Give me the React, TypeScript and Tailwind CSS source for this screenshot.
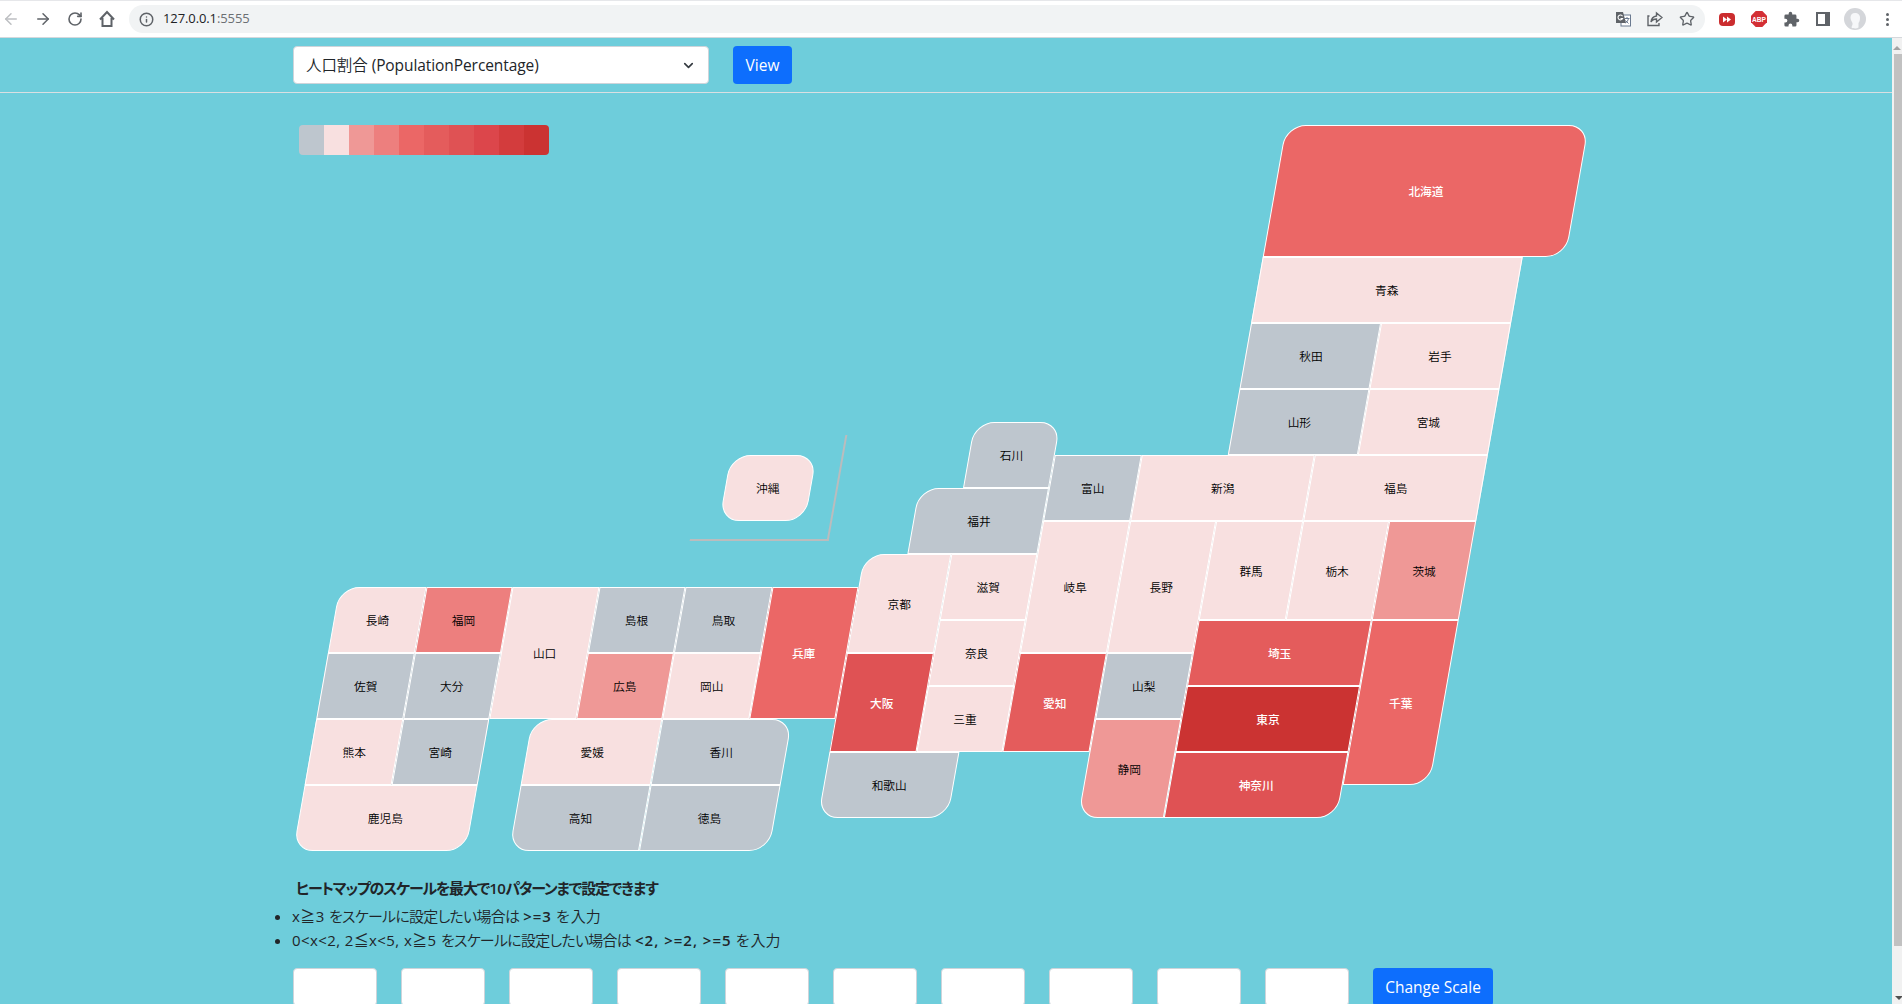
import React from "react";
import { ArrowLeft, ArrowRight, RotateCw, Info, Star, ChevronDown } from "lucide-react";

const FONT = "font-['Open_Sans','Noto_Sans_CJK_JP',sans-serif]";

const NONE = "bg-[#bec6ce] text-black font-[350]";
const L1 = "bg-[#f8e0e0] text-black font-[350]";
const L2 = "bg-[#ef9896] text-black font-[350]";
const L3 = "bg-[#ed7f7e] text-black font-[350]";
const L4 = "bg-[#eb6766] text-white font-medium";
const L5 = "bg-[#e45c5c] text-white font-medium";
const L6 = "bg-[#df5254] text-white font-medium";
const L9 = "bg-[#cb3332] text-white font-medium";

type Pref = [name: string, col: number, row: number, w: number, h: number, tone: string, round?: string];

const TL = "rounded-tl-[20px]";
const BR = "rounded-br-[20px]";
const BL = "rounded-bl-[20px]";

const PREFS: Pref[] = [
  ["北海道", 20, 0, 7, 4, L4, "rounded-tl-[20px] rounded-tr-[20px] rounded-br-[20px]"],
  ["青森", 20, 4, 6, 2, L1],
  ["秋田", 20, 6, 3, 2, NONE],
  ["岩手", 23, 6, 3, 2, L1],
  ["山形", 20, 8, 3, 2, NONE],
  ["宮城", 23, 8, 3, 2, L1],
  ["石川", 14, 9, 2, 2, NONE, "rounded-t-[20px]"],
  ["富山", 16, 10, 2, 2, NONE],
  ["新潟", 18, 10, 4, 2, L1],
  ["福島", 22, 10, 4, 2, L1],
  ["福井", 13, 11, 3, 2, NONE, TL],
  ["岐阜", 16, 12, 2, 4, L1],
  ["長野", 18, 12, 2, 4, L1],
  ["群馬", 20, 12, 2, 3, L1],
  ["栃木", 22, 12, 2, 3, L1],
  ["茨城", 24, 12, 2, 3, L2],
  ["京都", 12, 13, 2, 3, L1, TL],
  ["滋賀", 14, 13, 2, 2, L1],
  ["奈良", 14, 15, 2, 2, L1],
  ["埼玉", 20, 15, 4, 2, L5],
  ["千葉", 24, 15, 2, 5, L4, BR],
  ["大阪", 12, 16, 2, 3, L6],
  ["愛知", 16, 16, 2, 3, L5],
  ["山梨", 18, 16, 2, 2, NONE],
  ["三重", 14, 17, 2, 2, L1],
  ["東京", 20, 17, 4, 2, L9],
  ["静岡", 18, 18, 2, 3, L2, BL],
  ["神奈川", 20, 19, 4, 2, L6, BR],
  ["和歌山", 12, 19, 3, 2, NONE, "rounded-b-[20px]"],
  ["長崎", 0, 14, 2, 2, L1, TL],
  ["福岡", 2, 14, 2, 2, L3],
  ["山口", 4, 14, 2, 4, L1],
  ["島根", 6, 14, 2, 2, NONE],
  ["鳥取", 8, 14, 2, 2, NONE],
  ["兵庫", 10, 14, 2, 4, L4],
  ["佐賀", 0, 16, 2, 2, NONE],
  ["大分", 2, 16, 2, 2, NONE],
  ["広島", 6, 16, 2, 2, L2],
  ["岡山", 8, 16, 2, 2, L1],
  ["熊本", 0, 18, 2, 2, L1],
  ["宮崎", 2, 18, 2, 2, NONE],
  ["愛媛", 5, 18, 3, 2, L1, TL],
  ["香川", 8, 18, 3, 2, NONE, "rounded-tr-[20px]"],
  ["鹿児島", 0, 20, 4, 2, L1, "rounded-b-[20px]"],
  ["高知", 5, 20, 3, 2, NONE, BL],
  ["徳島", 8, 20, 3, 2, NONE, BR],
];

const SCALE = [
  "bg-[#bec6ce]",
  "bg-[#f8e0e0]",
  "bg-[#ef9896]",
  "bg-[#ed7f7e]",
  "bg-[#eb6766]",
  "bg-[#e45c5c]",
  "bg-[#df5254]",
  "bg-[#dc464b]",
  "bg-[#d33c3d]",
  "bg-[#cb3332]",
];

function Label({ children }: { children: React.ReactNode }) {
  return <span className="skew-x-[10deg] pt-[2px] text-[11.7px] leading-none">{children}</span>;
}

function Kana({ children }: { children: React.ReactNode }) {
  return <span className="font-[350] tracking-[-0.75px] [font-feature-settings:'palt']">{children}</span>;
}

function BrowserBar() {
  return (
    <div className="flex h-[38px] shrink-0 items-center border-b border-[#d5d8dc] border-t border-t-[#e6e7ea] bg-white text-[#5f6368]">
      <div className="flex w-[129px] shrink-0 items-center">
        <ArrowLeft size={18} className="ml-0.5 shrink-0 text-[#bdbfc2]" />
        <ArrowRight size={18} className="ml-3.5 shrink-0" />
        <RotateCw size={16} strokeWidth={2.4} className="ml-[15px] shrink-0" />
        <svg width="16" height="18" viewBox="0 0 16 18" className="ml-[16px] shrink-0" fill="none" stroke="currentColor" strokeWidth="2">
          <path d="M3.500 8v8h9V8M1 9.500 8 2l7 7.500" />
        </svg>
      </div>
      <div className="flex h-7 w-[1576px] shrink-0 items-center rounded-full bg-[#f1f3f4] pl-2.5">
        <Info size={15} strokeWidth={2.4} />
        <span className="ml-[9px] font-['Open_Sans',sans-serif] text-[13px] tracking-[-0.1px] text-[#202124]">
          127.0.0.1<span className="text-[#6b6f73]">:5555</span>
        </span>
        <div className="ml-auto flex items-center gap-4 pr-2.5">
          <svg width="16" height="16" viewBox="0 0 16 16">
            <rect x="6" y="4" width="9.5" height="11" fill="#fff" stroke="#6b7a90" />
            <path d="M1 1h7l3 11H1z" fill="#5f6368" />
            <path d="M7.500 5.200A2.400 2.400 0 1 0 7.600 7.500H5.500" fill="none" stroke="#fff" strokeWidth="1.1" />
            <path d="M9.500 7.500h5M12 6v1.500M13.500 7.500c-.5 2-1.500 3.500-3 4.500M10.500 9.500l3 3" fill="none" stroke="#6b7a90" />
          </svg>
          <svg width="16" height="16" viewBox="0 0 16 16" fill="none" stroke="currentColor" strokeWidth="1.4">
            <path d="M2.500 5H1v9.500h11V12M9.500 5V2l5.500 4.500-5.500 4.500V8C7 8 5 9 4 11c.3-3 2-5.500 5.500-6Z" />
          </svg>
          <Star size={16} />
        </div>
      </div>
      <div className="flex flex-1 items-center">
        <svg width="16" height="13" viewBox="0 0 16 13" className="ml-3.5">
          <rect width="16" height="13" rx="4" fill="#cb2d2f" />
          <path d="M4 3.500 8 6.500 4 9.500zM8 3.500l4 3-4 3z" fill="#fff" />
        </svg>
        <svg width="16" height="16" viewBox="0 0 16 16" className="ml-4">
          <path d="M4.700 0h6.600L16 4.700v6.600L11.300 16H4.700L0 11.300V4.700z" fill="#d32f35" />
          <text x="8" y="10.800" fontSize="7.500" fontWeight="700" textAnchor="middle" textLength="14" lengthAdjust="spacingAndGlyphs" fill="#fff" fontFamily="Liberation Sans">ABP</text>
        </svg>
        <svg width="17" height="17" viewBox="0 0 24 24" className="ml-4" fill="currentColor">
          <path d="M20.500 11H19V7a2 2 0 0 0-2-2h-4V3.500a2.500 2.500 0 0 0-5 0V5H4a2 2 0 0 0-2 2v3.800h1.500a2.700 2.700 0 0 1 0 5.400H2V20a2 2 0 0 0 2 2h3.800v-1.500a2.700 2.700 0 0 1 5.400 0V22H17a2 2 0 0 0 2-2v-4h1.500a2.500 2.500 0 0 0 0-5z" />
        </svg>
        <svg width="14" height="14" viewBox="0 0 14 14" className="ml-4">
          <path d="M1 1h12v12H1z" fill="#fff" stroke="#5f6368" strokeWidth="2" />
          <path d="M9 1h4v12H9z" fill="#5f6368" />
        </svg>
        <svg width="22" height="22" viewBox="0 0 22 22" className="ml-3.5">
          <circle cx="11" cy="11" r="11" fill="#d4d6da" />
          <path d="M11 5C8 5 6.500 7 6.500 9.500S8 14 8.500 15c.5 2-1 3-1 4.500 1.500 1 5 1.500 7 0V15c1-1 1.500-3 1.500-5.500S14 5 11 5z" fill="#f6f7f9" />
        </svg>
        <div className="ml-[20px] flex flex-col gap-[2px]">
          <i className="size-[3px] rounded-full bg-[#5f6368]" />
          <i className="size-[3px] rounded-full bg-[#5f6368]" />
          <i className="size-[3px] rounded-full bg-[#5f6368]" />
        </div>
      </div>
    </div>
  );
}

function MapGrid() {
  return (
    <div className="ml-[357px] grid w-[1168.5px] -skew-x-[10deg] grid-cols-[repeat(27,43.28px)] grid-rows-[repeat(22,33px)]">
      {PREFS.map(([name, col, row, w, h, tone, round]) => (
        <div
          key={name}
          className={`flex items-center justify-center border border-white ${tone} ${round ?? ""}`}
          style={{ gridColumn: `${col + 1} / span ${w}`, gridRow: `${row + 1} / span ${h}` }}
        >
          <Label>{name}</Label>
        </div>
      ))}
      <div className="col-[9/span_3] row-[10/span_4] -mr-[5px] mb-[13px] -ml-1 mt-[13px] flex items-start justify-center border-r-2 border-b-2 border-[#bbbcbd] pt-5">
        <div className="flex h-[66px] w-[86px] items-center justify-center rounded-[20px] border border-white bg-[#f8e0e0] font-[350] text-black">
          <Label>沖縄</Label>
        </div>
      </div>
    </div>
  );
}

export default function App() {
  return (
    <div className={`flex h-[1004px] w-[1902px] flex-col overflow-hidden bg-[#6ecddb] text-[#212529] ${FONT}`}>
      <BrowserBar />
      <div className="flex min-h-0 flex-1">
        <main className="min-w-0 flex-1 overflow-hidden">
          <div className="flex h-[55px] items-center border-b border-[#dadfe2] pl-[293px]">
            <div className="flex h-[38px] w-[416px] items-center justify-between rounded border border-[#ced4da] bg-white pl-3 pr-3">
              <span className="pt-0.5 text-[15.500px] tracking-[-0.08px]">
                <span className="font-[350]">人口割合</span> (PopulationPercentage)
              </span>
              <ChevronDown size={15} strokeWidth={2.600} className="text-[#343a40]" />
            </div>
            <button className="ml-6 h-[38px] w-[59px] rounded bg-[#0d6efd] pt-0.5 text-[15.500px] text-white">View</button>
          </div>
          <div className="ml-[298.500px] mt-8 flex h-[30px] w-[250px] overflow-hidden rounded">
            {SCALE.map((c) => (
              <div key={c} className={`flex-1 ${c}`} />
            ))}
          </div>
          <div className="-mt-[30px]">
            <MapGrid />
          </div>
          <div className="ml-[296px] mt-[25px] text-[15px] font-semibold leading-6 tracking-[-1.2px] [font-feature-settings:'palt']">
            ヒートマップのスケールを最大で<span className="tracking-[-0.5px]">10</span>パターンまで設定できます
          </div>
          <ul className="ml-[292px] mt-1 list-disc text-[15px] leading-6">
            <li>
              <span className="tracking-[0.4px]">x≧3 </span>
              <Kana>をスケールに設定したい場合は</Kana> <b className="font-semibold tracking-[1px]">&gt;=3</b>{" "}
              <span className="font-[350]">を入力</span>
            </li>
            <li>
              <span className="tracking-[0.4px]">0&lt;x&lt;2, 2≦x&lt;5, x≧5 </span>
              <Kana>をスケールに設定したい場合は</Kana> <b className="font-semibold tracking-[1px]">&lt;2, &gt;=2, &gt;=5</b>{" "}
              <span className="font-[350]">を入力</span>
            </li>
          </ul>
          <div className="ml-[293px] mt-4 flex gap-6">
            {SCALE.map((c) => (
              <input key={c} className="h-[38px] w-[84px] rounded border border-[#ced4da] bg-white" />
            ))}
            <button className="h-[38px] w-[120px] rounded bg-[#0d6efd] pt-0.5 text-[15.500px] text-white">Change Scale</button>
          </div>
        </main>
        <div className="flex w-[10px] shrink-0 flex-col items-center bg-[#f1f1f1]">
          <div className="mt-2 h-0 w-0 border-x-4 border-b-4 border-x-transparent border-b-[#a3a3a3]" />
          <div className="mt-1 ml-0.5 h-[892px] w-2 bg-[#c1c1c1]" />
          <div className="mb-1 ml-1 mt-auto h-0 w-0 border-x-4 border-t-4 border-x-transparent border-t-[#505050]" />
        </div>
      </div>
    </div>
  );
}
